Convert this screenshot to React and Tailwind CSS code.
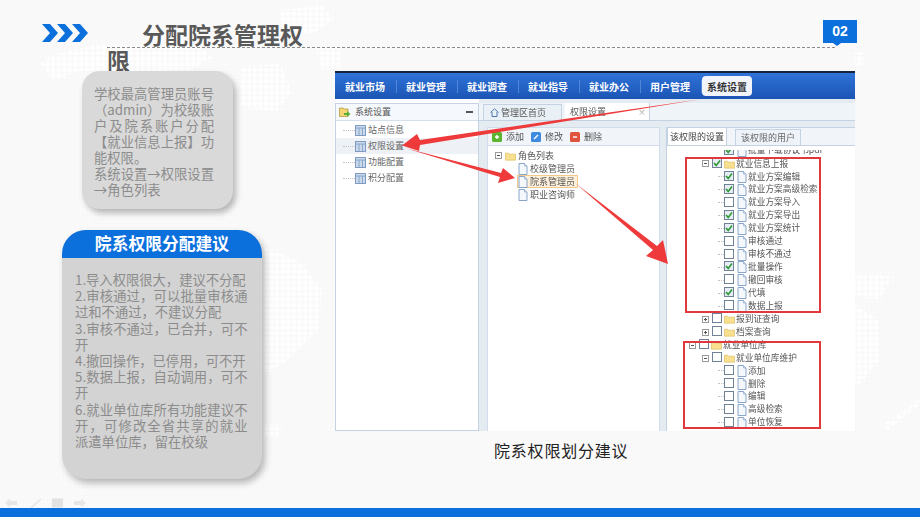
import React from 'react';

const CJK = "font-['Noto_Sans_CJK_SC','Liberation_Sans',sans-serif]";

const NAV_ITEMS = ['就业市场', '就业管理', '就业调查', '就业指导', '就业办公', '用户管理'];
const SIDE_ITEMS = ['站点信息', '权限设置', '功能配置', '积分配置'];

// depth = indent level, kind = leaf/folder, on = checked, fold = +/- toggle
const PERMISSIONS = [
  { label: '就业信息上报', depth: 1, kind: 'folder', on: true, fold: '-' },
  { label: '就业方案编辑', depth: 2, on: true },
  { label: '就业方案高级检索', depth: 2, on: true },
  { label: '就业方案导入', depth: 2 },
  { label: '就业方案导出', depth: 2, on: true },
  { label: '就业方案统计', depth: 2, on: true },
  { label: '审核通过', depth: 2 },
  { label: '审核不通过', depth: 2 },
  { label: '批量操作', depth: 2, on: true },
  { label: '撤回审核', depth: 2 },
  { label: '代填', depth: 2, on: true },
  { label: '数据上报', depth: 2 },
  { label: '报到证查询', depth: 1, kind: 'folder', fold: '+' },
  { label: '档案查询', depth: 1, kind: 'folder', fold: '+' },
  { label: '就业单位库', depth: 0, kind: 'folder', fold: '-' },
  { label: '就业单位库维护', depth: 1, kind: 'folder', fold: '-' },
  { label: '添加', depth: 2 },
  { label: '删除', depth: 2 },
  { label: '编辑', depth: 2 },
  { label: '高级检索', depth: 2 },
  { label: '单位恢复', depth: 2 },
];

function Folder() {
  return (
    <svg width="11" height="10" viewBox="0 0 12 10" className="shrink-0">
      <path d="M0.5 2 H4 L5 3 H11.5 V9.5 H0.5 Z" fill="#f9e08e" stroke="#dcc06a" strokeWidth="0.8" />
    </svg>
  );
}

function Doc() {
  return (
    <svg width="10" height="12" viewBox="0 0 10 12" className="shrink-0">
      <path d="M1 0.5 H6.5 L9 3 V11.5 H1 Z" fill="#f4f8fd" stroke="#7d9cc4" strokeWidth="0.9" />
      <path d="M6.5 0.5 V3 H9" fill="#d5e2f2" stroke="#7d9cc4" strokeWidth="0.6" />
    </svg>
  );
}

function GridIcon() {
  return (
    <svg width="11" height="11" viewBox="0 0 11 11" className="shrink-0">
      <rect x="0.5" y="0.5" width="10" height="10" fill="#c9d8ec" stroke="#7f9cc2" />
      <path d="M0.5 3 H10.5 M4 3 V10.5 M7.5 3 V10.5" stroke="#7f9cc2" strokeWidth="0.8" />
    </svg>
  );
}

function Check({ on }) {
  return (
    <span className={`relative w-[10px] h-[10px] mb-[2px] shrink-0 border border-[#6f8296] ${on ? 'bg-[#e6edf4]' : 'bg-white'}`}>
      {on && (
        <svg width="8" height="8" viewBox="0 0 8 8" className="absolute inset-0">
          <path d="M1 4 L3.2 6.4 L7 1.6" fill="none" stroke="#2e9a35" strokeWidth="1.6" />
        </svg>
      )}
    </span>
  );
}

function FoldBox({ sign }) {
  return (
    <svg width="7" height="7" viewBox="0 0 7 7" className="shrink-0">
      <rect x="0.5" y="0.5" width="6" height="6" fill="#fff" stroke="#9a9a9a" />
      <path d={sign === '-' ? 'M2 3.5 H5' : 'M2 3.5 H5 M3.5 2 V5'} stroke="#555" strokeWidth="1" />
    </svg>
  );
}

function PermissionRow({ label, depth, kind, on, fold }) {
  const indent = depth === 0 ? 'pl-[22px]' : depth === 1 ? 'pl-[35px]' : 'pl-[51px]';
  return (
    <div className={`flex items-center h-[12.95px] ${indent}`}>
      {fold && <FoldBox sign={fold} />}
      <span className={fold ? 'w-[3px]' : 'w-[6px] border-t border-dotted border-[#c4c4c4]'} />
      <Check on={on} />
      <span className={kind === 'folder' ? 'w-[2px]' : 'w-[3px]'} />
      {kind === 'folder' ? <Folder /> : <Doc />}
      <span className="ml-[1px] whitespace-nowrap text-[8.7px] leading-none text-[#555]">{label}</span>
    </div>
  );
}

function NavBar() {
  return (
    <div className="flex items-center h-[28px] shrink-0 border-t-[2px] border-[#14233f] bg-gradient-to-b from-[#2f72d8] to-[#1b55b4] pl-[10px]">
      {NAV_ITEMS.map((item) => (
        <span key={item} className="flex items-center w-[61px] text-[10px] font-bold text-white whitespace-nowrap">
          {item}
          <span className="ml-[11px] w-[1px] h-[13px] bg-[#4f86d8]" />
        </span>
      ))}
      <span className="ml-[-9px] flex items-center justify-center w-[50px] h-[20px] rounded-sm bg-[#f1f5fb] text-[10px] font-bold text-[#333]">
        系统设置
      </span>
    </div>
  );
}

function SidePanel() {
  return (
    <div className="w-[144px] shrink-0 mt-[4px] border border-[#c4d2e4] bg-white">
      <div className="flex items-center h-[17px] pl-[3px] pr-[5px] gap-[4px] border-b border-[#d5dfec] bg-[#f5f8fc]">
        <svg width="12" height="12" viewBox="0 0 12 12" className="shrink-0">
          <path d="M0.5 2 H4 L5 3 H9 V10.5 H0.5 Z" fill="#f4d675" stroke="#b99a3e" strokeWidth="0.8" />
          <path d="M5 7 H8 V5 L11.5 8 L8 11 V9 H5 Z" fill="#59ad3a" />
        </svg>
        <span className="text-[9px] text-[#555]">系统设置</span>
        <span className="ml-auto w-[7px] h-[1.5px] bg-[#555]" />
      </div>
      <div className="flex flex-col pt-[1px]">
        {SIDE_ITEMS.map((item, i) => (
          <div key={item} className={`flex items-center h-[16px] pl-[7px] ${i === 1 ? 'bg-[#eef1f6]' : ''}`}>
            <span className="w-[12px] border-t border-dotted border-[#c4c4c4]" />
            <GridIcon />
            <span className="ml-[2px] text-[9px] text-[#666]">{item}</span>
          </div>
        ))}
      </div>
    </div>
  );
}

function TabStrip() {
  return (
    <div className="flex items-end h-[18px] shrink-0 mt-[4px] pl-[4px] gap-[3px] border-b border-[#c4d2e4] bg-[#eff4f8]">
      <span className="flex items-center w-[79px] h-[16px] pl-[6px] gap-[2px] border border-b-0 border-[#c4d2e4] bg-[#e9f0f6] text-[9px] text-[#555]">
        <svg width="9" height="9" viewBox="0 0 9 9" className="shrink-0">
          <path d="M0.5 4.5 L4.5 0.8 L8.5 4.5 M2 4 V8.5 H7 V4" fill="none" stroke="#4f77ad" strokeWidth="1" />
        </svg>
        管理区首页
      </span>
      <span className="flex items-center justify-between w-[85px] h-[17px] pl-[5px] pr-[3px] bg-white border-r border-[#c4d2e4] text-[9px] text-[#555]">
        权限设置
        <span className="text-[8px] leading-none text-[#999]">×</span>
      </span>
    </div>
  );
}

function ToolIcon({ bg, d }) {
  return (
    <svg width="10" height="10" viewBox="0 0 10 10" className="shrink-0">
      <rect width="10" height="10" rx="1.5" fill={bg} />
      <path d={d} fill="none" stroke="#fff" strokeWidth="1.4" />
    </svg>
  );
}

function RolePanel() {
  return (
    <div className="flex flex-col w-[173px] shrink-0 bg-white border-x border-[#d2dcea]">
      <div className="flex items-center h-[19px] shrink-0 pl-[4px] border-y border-[#d2dcea] bg-[#f1f5fa] text-[9px] text-[#555]">
        <ToolIcon bg="#5cb531" d="M3 5 H7 M5 3 V7" />
        <span className="ml-[4px] w-[18px]">添加</span>
        <span className="w-[7px]" />
        <ToolIcon bg="#3e8ade" d="M3 7 L7 3" />
        <span className="ml-[4px] w-[18px]">修改</span>
        <span className="w-[7px]" />
        <ToolIcon bg="#e0533c" d="M3 5 H7" />
        <span className="ml-[4px]">删除</span>
      </div>
      <div className="pt-[3px] pl-[7px]">
        <div className="flex items-center h-[13px]">
          <FoldBox sign="-" />
          <span className="ml-[3px]"><Folder /></span>
          <span className="ml-[2px] text-[9px] text-[#555]">角色列表</span>
        </div>
        <div className="flex flex-col pl-[22px]">
          <div className="flex items-center h-[13px] gap-[2px] pl-[1px]"><Doc /><span className="text-[9px] text-[#555]">校级管理员</span></div>
          <div className="flex items-center h-[13px] w-[61px] gap-[2px] border border-[#f2c98a] bg-[#fdf1dc]"><Doc /><span className="text-[9px] text-[#555]">院系管理员</span></div>
          <div className="flex items-center h-[13px] gap-[2px] pl-[1px]"><Doc /><span className="text-[9px] text-[#555]">职业咨询师</span></div>
        </div>
      </div>
    </div>
  );
}

function PermissionPanel() {
  return (
    <div className="flex flex-col flex-1 min-w-0 bg-white border-l border-[#c4d2e4]">
      <div className="flex items-end h-[19px] shrink-0 gap-[1px] border-y border-[#c4d2e4] bg-[#f1f5fa]">
        <span className="flex items-center justify-center w-[60px] h-[17px] bg-white border-x border-[#c4d2e4] text-[9px] text-[#444]">该权限的设置</span>
        <span className="flex items-center justify-center w-[66px] h-[16px] ml-[7px] bg-[#eef3f9] border-x border-t border-[#c4d2e4] text-[9px] text-[#666]">该权限的用户</span>
      </div>
      <div className="relative flex-1 overflow-hidden pt-[4px]">
        {/* row cut off by the scroll position */}
        <div className="flex items-end h-[7px] pl-[57px] overflow-hidden">
          <span className="flex items-center h-[13px] shrink-0">
            <Check on />
            <span className="w-[3px]" />
            <Doc />
            <span className="ml-[1px] whitespace-nowrap text-[8.7px] leading-none text-[#555]">批量下载协议书pdf</span>
          </span>
        </div>
        <div className="mt-[0.5px]">
          {PERMISSIONS.map((row) => (
            <PermissionRow key={row.label} {...row} />
          ))}
        </div>
        {/* red highlight frames over the tree */}
        <div className="absolute left-[18px] top-[11px] w-[136px] h-[156px] border-2 border-[#e0383c]" />
        <div className="absolute left-[16px] top-[195px] w-[138px] h-[88px] border-2 border-[#e0383c]" />
      </div>
    </div>
  );
}

function Arrows() {
  return (
    <svg className="absolute inset-0 pointer-events-none" width="520" height="360" viewBox="0 0 520 360">
      {/* nav tab to side menu */}
      <polygon points="367,28 85,69 82,63 67,74.5 84,80 85,74" fill="#ee3a3a" />
      {/* side menu to role */}
      <polygon points="70,77 166,102 168,97 180,107 163,112 165,106" fill="#ee3a3a" />
      {/* role to permission tree */}
      <polygon points="240,112 322,175 328,169 333,193 311,185 318,179" fill="#ee3a3a" />
    </svg>
  );
}

function AppWindow() {
  return (
    <div className="relative w-[520px] h-[360px] shrink-0 overflow-hidden bg-white">
      <div className="flex flex-col h-full blur-[0.45px]">
        <NavBar />
        <div className="flex flex-1 min-h-0">
          <SidePanel />
          <div className="flex flex-col flex-1 min-w-0 bg-[#e4ecf2]">
            <TabStrip />
            <div className="flex flex-1 min-h-0 pt-[6px] pl-[8px] gap-[6px]">
              <RolePanel />
              <PermissionPanel />
            </div>
          </div>
        </div>
      </div>
      <Arrows />
    </div>
  );
}

// Faint dotted world map behind the slide
function MapBackdrop() {
  return (
    <svg className="absolute inset-0" width="920" height="517" viewBox="0 0 920 517">
      <defs>
        <pattern id="dots" width="5.6" height="5.6" patternUnits="userSpaceOnUse">
          <circle cx="2.8" cy="2.8" r="2.3" fill="#ffffff" />
        </pattern>
        <pattern id="weave" width="4" height="4" patternUnits="userSpaceOnUse">
          <rect width="4" height="4" fill="#f8f8f8" />
          <rect width="3" height="3" fill="#fafafa" />
        </pattern>
      </defs>
      <rect width="920" height="517" fill="url(#weave)" />
      <g fill="url(#dots)">
        <path d="M40 62 L70 50 L108 44 L200 46 L212 58 L190 70 L130 72 L84 70 L52 80 Z" />
        <path d="M240 66 L280 64 L292 92 L276 112 L240 106 Z" />
        <path d="M278 10 L322 6 L334 20 L312 34 L284 30 Z" />
        <path d="M316 48 L340 48 L340 68 L322 70 Z" />
        <path d="M262 246 L300 262 L322 290 L318 330 L290 358 L270 372 L262 372 Z" />
        <path d="M262 424 L282 424 L280 438 L262 436 Z" />
        <path d="M855 52 L864 52 L864 64 L855 66 Z" />
        <path d="M855 274 L892 276 L880 300 L855 296 Z" />
        <path d="M855 304 L878 320 L880 360 L860 384 L855 384 Z" />
        <path d="M880 426 L906 410 L920 398 L920 404 L888 430 Z" />
      </g>
    </svg>
  );
}

function NoteCard() {
  return (
    <div className="w-[151px] h-[138px] ml-[82px] pl-[12px] pr-[19px] pt-[15px] rounded-[18px] bg-[#d9d9d9] shadow-[3px_4px_6px_rgba(0,0,0,0.28)]">
      <p className="text-[13.3px] leading-[16px] text-[#8c8c8c] text-justify [text-spacing-trim:space-all]">
        学校最高管理员账号（admin）为校级账户及院系账户分配【就业信息上报】功能权限。
        <br />
        系统设置→权限设置→角色列表
      </p>
    </div>
  );
}

function AdviceCard() {
  return (
    <div className="flex flex-col w-[200px] h-[249px] ml-[62px] mt-[21px] rounded-[24px] bg-[#d3d3d3] overflow-hidden shadow-[3px_4px_7px_rgba(0,0,0,0.28)]">
      <div className="flex items-center justify-center h-[28px] shrink-0 bg-[#0b6fdc] text-[16.8px] font-bold text-white">
        院系权限分配建议
      </div>
      <p className="pl-[13px] pr-[14.5px] pt-[14px] text-[13.3px] leading-[16.2px] text-[#8c8c8c] text-justify">
        1.导入权限很大，建议不分配
        <br />
        2.审核通过，可以批量审核通过和不通过，不建议分配
        <br />
        3.审核不通过，已合并，可不开
        <br />
        4.撤回操作，已停用，可不开
        <br />
        5.数据上报，自动调用，可不开
        <br />
        6.就业单位库所有功能建议不开，可修改全省共享的就业派遣单位库，留在校级
      </p>
    </div>
  );
}

export default function App() {
  return (
    <div className={`relative flex flex-col w-[920px] h-[517px] overflow-hidden ${CJK}`}>
      <MapBackdrop />
      <header className="relative h-[71px] shrink-0">
        <svg width="46" height="18" viewBox="0 0 46 18" className="absolute left-[42px] top-[24px]">
          <path d="M0 0 H8 L16 9 L8 18 H0 L8 9 Z M15 0 H23 L31 9 L23 18 H15 L23 9 Z M30 0 H38 L46 9 L38 18 H30 L38 9 Z" fill="#0b6fdc" />
        </svg>
        <div className="h-[48px] ml-[107px] mr-[85px] border-b border-dashed border-[#8a8a8a]" />
        <h1 className="absolute left-[107px] top-[21px] w-[200px] text-[23px] leading-[26px] font-bold text-[#595959] indent-[35px]">
          分配院系管理权限
        </h1>
        <div className="absolute left-[823px] top-[20px] flex items-center justify-center w-[34px] h-[23px] bg-[#0b6fdc] text-[14px] font-bold text-white font-['Liberation_Sans',sans-serif]">
          02
          <span className="absolute left-[10px] top-[23px] border-x-[4px] border-t-[3px] border-x-transparent border-t-[#0b6fdc]" />
        </div>
      </header>

      <main className="relative flex flex-1 min-h-0">
        <div className="w-[335px] shrink-0">
          <NoteCard />
          <AdviceCard />
        </div>
        <div className="flex flex-col">
          <AppWindow />
          <p className="ml-[159px] mt-[7px] text-[16px] leading-[24px] tracking-[0.8px] text-[#222]">院系权限划分建议</p>
        </div>
      </main>

      {/* slide navigation hints */}
      <svg width="82" height="10" viewBox="0 0 82 10" className="absolute left-[5px] bottom-[9px]">
        <path d="M0 5 L5 0.5 V3 H12 V7 H5 V9.5 Z" fill="#e6e6e6" />
        <path d="M26 9.5 L36 1" stroke="#e6e6e6" strokeWidth="1.5" />
        <rect x="47" y="0.5" width="11" height="9" fill="#e2e2e2" />
        <path d="M81 5 L76 0.5 V3 H69 V7 H76 V9.5 Z" fill="#e6e6e6" />
      </svg>

      <footer className="relative h-[9px] shrink-0 bg-[#0b6fdc]" />
    </div>
  );
}
